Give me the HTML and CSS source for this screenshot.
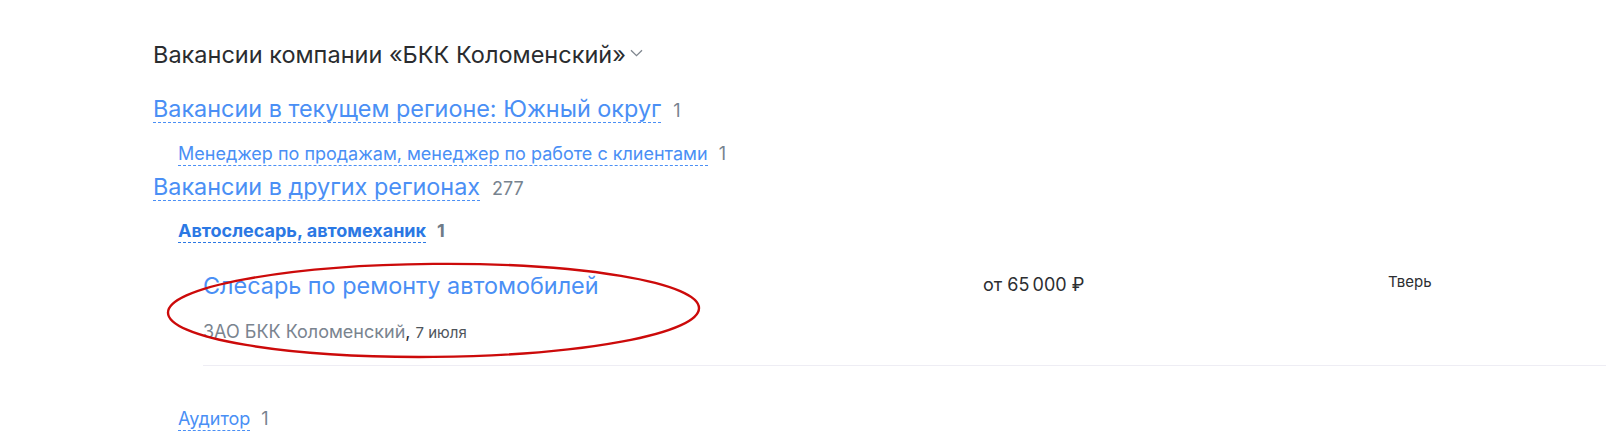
FILE: index.html
```html
<!DOCTYPE html>
<html lang="ru">
<head>
<meta charset="utf-8">
<title>Вакансии компании</title>
<link rel="stylesheet" href="styles.css">
</head>
<body>
<main class="page">
  <div class="company-head">
    <h2 class="title">Вакансии компании «БКК Коломенский»</h2>
    <svg class="chevron" width="13" height="8" viewBox="0 0 13 8"><path d="M1 1.2 L6.5 6.6 L12 1.2" fill="none" stroke="#7f868f" stroke-width="1.3"/></svg>
  </div>

  <div class="region">
    <a class="region-link" href="#">Вакансии в текущем регионе: Южный округ</a>
    <span class="count">1</span>
  </div>
  <div class="group group-first">
    <a class="group-link" href="#">Менеджер по продажам, менеджер по работе с клиентами</a>
    <span class="count">1</span>
  </div>

  <div class="region region-2">
    <a class="region-link" href="#">Вакансии в других регионах</a>
    <span class="count">277</span>
  </div>
  <div class="group group-open">
    <a class="group-link bold" href="#">Автослесарь, автомеханик</a>
    <span class="count bold">1</span>
  </div>

  <div class="vacancy">
    <div class="vacancy-main">
      <a class="vacancy-title" href="#">Слесарь по ремонту автомобилей</a>
      <div class="vacancy-meta"><span class="employer">ЗАО БКК Коломенский</span>, <span class="date">7 июля</span></div>
    </div>
    <div class="salary">от 65&#8201;000 ₽</div>
    <div class="city">Тверь</div>
    <svg class="mark" width="546" height="104" viewBox="0 0 546 104"><ellipse cx="270.5" cy="50.4" rx="265.5" ry="46.5" fill="none" stroke="#cc0a0a" stroke-width="2.4" transform="rotate(-0.5 270.5 50.4)"/></svg>
  </div>

  <div class="group group-last">
    <a class="group-link" href="#">Аудитор</a>
    <span class="count">1</span>
  </div>
</main>
</body>
</html>
```
FILE: styles.css
```css
* { box-sizing: border-box; }
html, body { margin: 0; padding: 0; background: #fff; }
body {
  font-family: Inter, "Noto Sans", Roboto, sans-serif;
  color: #2c2e31;
  width: 1606px;
  height: 443px;
  overflow: hidden;
}
a { text-decoration: none; }

.page {
  padding: 41px 0 0 153px;
}

.company-head {
  display: flex;
  align-items: center;
  gap: 4px;
  height: 28px;
}
.title {
  margin: 0;
  font-size: 23.5px;
  font-weight: 400;
  line-height: 28px;
  color: #2a2c2f;
}
.chevron { margin-top: -4px; }

.region {
  display: flex;
  align-items: baseline;
  gap: 12px;
  margin-top: 27px;
}
.region-2 { margin-top: 8px; }
.region-link {
  font-size: 23.4px;
  line-height: 26px;
  color: #4a8ff5;
  border-bottom: 1px dashed #4a8ff5;
}

.count {
  font-size: 18px;
  color: #77838f;
}
.count.bold { font-weight: 700; color: #6f7b88; }

.group {
  display: flex;
  align-items: baseline;
  gap: 11px;
  margin-left: 25px;
}
.group-first { margin-top: 20px; }
.group-open { margin-top: 19px; }
.group-last { margin-top: 42px; }
.group-link {
  font-size: 18px;
  line-height: 22px;
  color: #4a8ff5;
  border-bottom: 1px dashed #4a8ff5;
}
.group-link.bold {
  font-weight: 700;
  color: #2b78e4;
  border-bottom-color: #2b78e4;
}

.vacancy {
  position: relative;
  display: grid;
  grid-template-columns: 780px 405px 1fr;
  margin-left: 50px;
  margin-top: 29px;
  padding-bottom: 20px;
  border-bottom: 1px solid #eeedf4;
}
.vacancy-title {
  display: block;
  font-size: 23.4px;
  line-height: 28px;
  color: #4a8ff5;
}
.vacancy-meta {
  margin-top: 20px;
  font-size: 18px;
  line-height: 24px;
  color: #2c2e31;
}
.employer { color: #7a848f; }
.date { font-size: 15px; color: #4e545b; }
.salary {
  font-size: 18px;
  line-height: 24px;
  padding-top: 1px;
  color: #2c2e31;
}
.city {
  font-size: 15px;
  line-height: 20px;
  color: #2c2e31;
}
.mark {
  position: absolute;
  left: -40px;
  top: -12px;
  pointer-events: none;
}
```
